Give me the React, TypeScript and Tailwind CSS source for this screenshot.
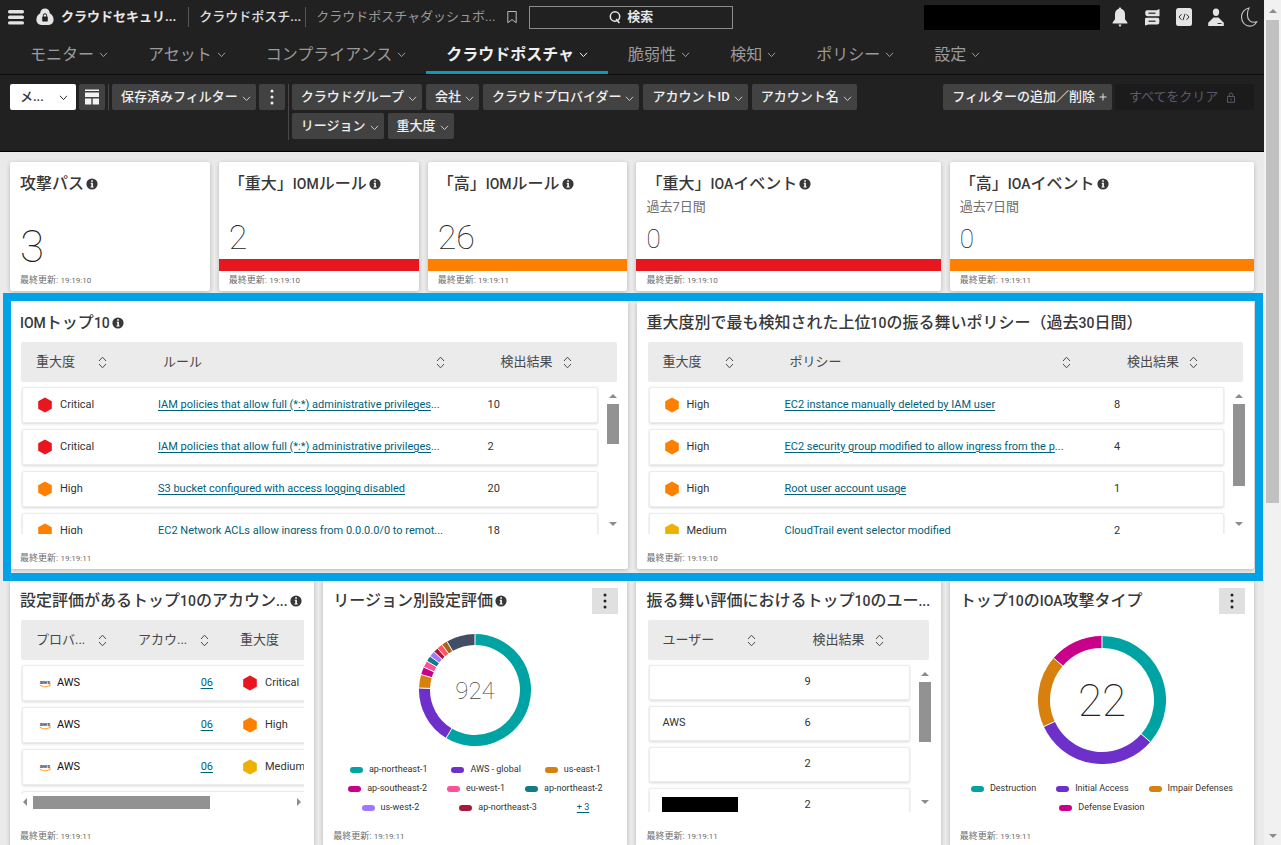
import React from 'react';
import { clsx } from 'clsx';

type Severity = 'Critical' | 'High' | 'Medium';

const severityColors: Record<Severity, string> = {
  Critical: 'fill-[#e8171f]',
  High: 'fill-[#ff8000]',
  Medium: 'fill-[#edb100]',
};

const navTabs = [
  { label: 'モニター' },
  { label: 'アセット' },
  { label: 'コンプライアンス' },
  { label: 'クラウドポスチャ', active: true },
  { label: '脆弱性' },
  { label: '検知' },
  { label: 'ポリシー' },
  { label: '設定' },
];

const filters = [
  'クラウドグループ',
  '会社',
  'クラウドプロバイダー',
  'アカウントID',
  'アカウント名',
  'リージョン',
  '重大度',
];

const iomRows: FindingRow[] = [
  { severity: 'Critical', name: 'IAM policies that allow full (*:*) administrative privileges', cut: true, count: 10 },
  { severity: 'Critical', name: 'IAM policies that allow full (*:*) administrative privileges', cut: true, count: 2 },
  { severity: 'High', name: 'S3 bucket configured with access logging disabled', count: 20 },
  { severity: 'High', name: 'EC2 Network ACLs allow ingress from 0.0.0.0/0 to remot', cut: true, count: 18 },
];

const policyRows: FindingRow[] = [
  { severity: 'High', name: 'EC2 instance manually deleted by IAM user', count: 8 },
  { severity: 'High', name: 'EC2 security group modified to allow ingress from the p', cut: true, count: 4 },
  { severity: 'High', name: 'Root user account usage', count: 1 },
  { severity: 'Medium', name: 'CloudTrail event selector modified', count: 2 },
];

const accountRows: Severity[] = ['Critical', 'High', 'Medium'];

const regionSlices: Slice[] = [
  { value: 211, color: '#00a3a3' },
  { value: 61, color: '#6e30ca' },
  { value: 14, color: '#d7800d' },
  { value: 8, color: '#c8008a' },
  { value: 7, color: '#ff5098' },
  { value: 6, color: '#127a88' },
  { value: 6, color: '#a078ff' },
  { value: 5, color: '#a8183a' },
  { value: 6, color: '#ff5560' },
  { value: 6, color: '#a8641c' },
  { value: 30, color: '#424e66' },
];

const attackSlices: Slice[] = [
  { value: 8, color: '#00a3a3' },
  { value: 7, color: '#6e30ca' },
  { value: 4, color: '#d7800d' },
  { value: 3, color: '#c8008a' },
];

/* ---------- icons ---------- */

function Chevron({ className }: { className?: string }) {
  return (
    <svg viewBox="0 0 9 9" className={clsx('h-[9px] w-[9px] shrink-0', className)} fill="none" stroke="currentColor">
      <path d="M1 2.8 4.5 6.6 8 2.8" />
    </svg>
  );
}

function Sorter() {
  return (
    <svg viewBox="0 0 9 13" className="h-[13px] w-[9px] shrink-0" fill="none" stroke="#4a4a4a">
      <path d="M1 5 4.5 1.2 8 5M1 8 4.5 11.8 8 8" />
    </svg>
  );
}

function InfoIcon() {
  return (
    <svg viewBox="0 0 12 12" className="h-3 w-3 shrink-0">
      <circle cx="6" cy="6" r="5.6" fill="#383838" />
      <path d="M5.2 2.3h1.7v1.5H5.2zM4.7 4.8h2.2v3.6h.7v1H4.5v-1h.8V5.8h-.6z" fill="#fff" />
    </svg>
  );
}

function Hexagon({ severity }: { severity: Severity }) {
  return (
    <svg viewBox="0 0 14 16" className={clsx('h-4 w-[14px] shrink-0', severityColors[severity])}>
      <path d="M7 .4 13.8 4.2v7.6L7 15.6.2 11.8V4.2z" />
    </svg>
  );
}

function Kebab({ className }: { className?: string }) {
  return (
    <svg viewBox="0 0 4 16" className={clsx('h-4 w-1', className)} fill="currentColor">
      <circle cx="2" cy="2" r="1.5" />
      <circle cx="2" cy="8" r="1.5" />
      <circle cx="2" cy="14" r="1.5" />
    </svg>
  );
}

function AwsLogo() {
  return (
    <svg viewBox="0 0 12 9" className="h-[9px] w-3 shrink-0">
      <text x="6" y="4.5" textAnchor="middle" fontSize="6" fontWeight="700" fill="#3b3f47">
        aws
      </text>
      <path d="M.8 6.1c3 2.2 7 2.2 10 .3" fill="none" stroke="#ff9a1a" strokeWidth="1" />
      <path d="M9.6 5.8l1.8-.1-.5 1.6" fill="none" stroke="#ff9a1a" strokeWidth=".7" />
    </svg>
  );
}

function MenuIcon() {
  return (
    <svg viewBox="0 0 16 16" className="h-4 w-4" fill="#e4e4e4">
      <rect x="0" y="1" width="16" height="3.4" rx="1.6" />
      <rect x="0" y="6.6" width="16" height="3.4" rx="1.6" />
      <rect x="0" y="12.2" width="16" height="3.4" rx="1.6" />
    </svg>
  );
}

function CloudLockIcon() {
  return (
    <svg viewBox="0 0 18 18" className="h-[18px] w-[18px]">
      <path
        d="M9 .5c2.7 0 4.6 2 4.8 4.7C16.4 6.7 17.6 9 17.6 11.6c0 3.2-2 5.4-5 5.4H5.4c-3 0-5-2.2-5-5.4C.4 9 1.6 6.7 4.2 5.2 4.4 2.5 6.3.5 9 .5z"
        fill="#e4e4e4"
      />
      <rect x="6.2" y="8.6" width="5.6" height="4.8" rx=".6" fill="#212121" />
      <path d="M7.4 8.8V7.3a1.6 1.6 0 0 1 3.2 0v1.5" fill="none" stroke="#212121" strokeWidth="1" />
    </svg>
  );
}

function BellIcon() {
  return (
    <svg viewBox="0 0 16 22" className="h-[22px] w-4" fill="#e4e4e4">
      <path d="M8 1.5c.7 0 1.1.5 1.100 1.200C11.600 3.400 13 5.400 13 8.200v5l2.400 3.300v1H.6v-1L3 13.200v-5c0-2.800 1.400-4.800 3.900-5.500C6.900 2 7.300 1.500 8 1.500zM6.400 18.500h3.200L8 21.200z" />
    </svg>
  );
}

function StackIcon() {
  return (
    <svg viewBox="0 0 16 20" className="h-5 w-4">
      <path d="M3 3.200h9.500L15.500 2v7.200H4C2 9.200 1.200 8.200 1.200 6.200s.5-3 1.800-3z" fill="#e4e4e4" />
      <path d="M2.500 10.800h11c1.300 0 1.800.7 1.800 2v2.700c0 1.300-.7 2-2 2H4.500L1 18.500v-6c0-1.100.5-1.700 1.500-1.700z" fill="#e4e4e4" />
      <path d="M5 6.200h6M5 14.200h6" stroke="#4a4a4a" strokeWidth="1.500" strokeLinecap="round" />
    </svg>
  );
}

function CodeIcon() {
  return (
    <svg viewBox="0 0 16 20" className="h-5 w-4">
      <rect width="16" height="18" y="1" rx="2.5" fill="#e4e4e4" />
      <path d="M5.500 7.200 3 10l2.500 2.800M10.500 7.200 13 10l-2.500 2.800M9 6.800l-2 6.400" fill="none" stroke="#333" />
    </svg>
  );
}

function UserIcon() {
  return (
    <svg viewBox="0 0 16 20" className="h-5 w-4" fill="#e4e4e4">
      <path d="M8 1.500c2.100 0 3.200 1.400 3.200 3.400C11.200 7.200 10 9 8 9S4.800 7.200 4.800 4.900C4.800 2.900 5.900 1.500 8 1.500z" />
      <path d="M5.500 10.400h5l5.300 5.400V19H.2v-3.200z" />
      <path d="M9.500 16.500h4" stroke="#333" />
    </svg>
  );
}

function MoonIcon() {
  return (
    <svg viewBox="0 0 18 22" className="h-[22px] w-[18px]" fill="none" stroke="#c4c4c4" strokeWidth="1.1">
      <path d="M9 2C4.500 2.800 1.500 6.600 1.500 11c0 5.200 3.700 9.100 8.200 9.100 3 0 5.300-1.400 6.900-4.200-5.800 1.400-9.200-2-9.200-7C7.400 5.800 7.900 3.700 9 2z" />
    </svg>
  );
}

function LayoutIcon() {
  return (
    <svg viewBox="0 0 14 16" className="h-4 w-[14px]" fill="#f4f4f4">
      <path d="M0 .5h14V2H0zM0 3.500h14V8H0zM0 9.500h6.300v6H0zM7.700 9.500H14v6H7.700z" />
    </svg>
  );
}

/* ---------- header ---------- */

function TopBar() {
  return (
    <div className="flex h-[34px] items-center pl-2 pr-1.5 text-[13px] leading-5">
      <button type="button" aria-label="メニュー">
        <MenuIcon />
      </button>
      <div className="ml-3 flex items-center gap-[7px] font-bold text-[#e8e8e8]">
        <CloudLockIcon />
        クラウドセキュリ...
      </div>
      <div className="ml-3 mr-2.5 h-5 w-px bg-[#555]" />
      <span className="font-medium text-[#e0e0e0]">クラウドポスチ...</span>
      <div className="ml-1 mr-2.5 h-5 w-px bg-[#555]" />
      <span className="text-[#9b9b9b]">クラウドポスチャダッシュボ...</span>
      <button type="button" aria-label="ブックマーク" className="ml-3">
        <svg viewBox="0 0 10 14" className="h-[14px] w-2.5" fill="none" stroke="#bdbdbd">
          <path d="M.8 1.500h8.400v11.200L5 9.600.8 12.700z" />
        </svg>
      </button>
      <button
        type="button"
        className="ml-3 flex h-[23px] w-[204px] items-center justify-center gap-1.5 border border-[#8c8c8c] font-bold text-[#e8e8e8]"
      >
        <svg viewBox="0 0 12 14" className="h-[14px] w-3" fill="none" stroke="#e8e8e8" strokeWidth="1.5">
          <circle cx="6" cy="6.500" r="4.700" />
          <path d="M7.200 9l3.200 4" />
        </svg>
        検索
      </button>
      <div className="ml-auto h-[25px] w-[176px] bg-black" />
      <div className="ml-3 flex items-center gap-4">
        <BellIcon />
        <StackIcon />
        <CodeIcon />
        <UserIcon />
        <MoonIcon />
      </div>
    </div>
  );
}

function NavTabs() {
  return (
    <nav className="flex h-10 items-stretch pl-2.5 text-base">
      {navTabs.map((tab) => (
        <a
          key={tab.label}
          href="#"
          className={clsx(
            'flex items-center gap-[5px] border-b-3 px-5 pt-1',
            tab.active ? 'border-[#079cbb] font-bold text-[#efefef]' : 'border-transparent text-[#9b9b9b]'
          )}
        >
          {tab.label}
          <Chevron />
        </a>
      ))}
    </nav>
  );
}

function FilterButton({ label }: { label: string }) {
  return (
    <button
      type="button"
      className="flex h-[26px] items-center gap-1 rounded-xs bg-[#424242] pl-[9px] pr-[5px] text-[#f0f0f0]"
    >
      {label}
      <Chevron className="mt-[3px] text-[#c8c8c8]" />
    </button>
  );
}

function FilterBar() {
  return (
    <div className="flex min-h-[78px] items-start border-b border-t border-b-black border-t-[#0c0c0c] px-2.5 pt-[9px] text-[13px] font-medium leading-5">
      <button
        type="button"
        className="flex h-[26px] w-[66px] items-center justify-between rounded-xs bg-white pl-2.5 pr-2 text-[#333]"
      >
        メ...
        <Chevron />
      </button>
      <button
        type="button"
        aria-label="レイアウト"
        className="ml-[3px] flex h-[26px] w-[26px] items-center justify-center rounded-xs bg-[#424242]"
      >
        <LayoutIcon />
      </button>
      <div className="mx-[3px] h-[26px] w-px bg-[#484848]" />
      <FilterButton label="保存済みフィルター" />
      <button
        type="button"
        aria-label="その他"
        className="ml-[3px] flex h-[26px] w-[26px] items-center justify-center rounded-xs bg-[#424242]"
      >
        <Kebab className="text-[#f0f0f0]" />
      </button>
      <div className="mx-[3px] h-14 w-px bg-[#484848]" />
      <div className="flex max-w-[600px] flex-1 flex-wrap gap-x-1 gap-y-[3px]">
        {filters.map((label) => (
          <FilterButton key={label} label={label} />
        ))}
      </div>
      <div className="ml-auto flex gap-[3px]">
        <button
          type="button"
          className="flex h-[26px] items-center gap-1 rounded-xs bg-[#424242] pl-[9px] pr-[5px] text-[#f0f0f0]"
        >
          フィルターの追加／削除
          <svg viewBox="0 0 8 8" className="h-2 w-2" stroke="#e0e0e0">
            <path d="M4 .5v7M.5 4h7" />
          </svg>
        </button>
        <button
          type="button"
          disabled
          className="flex h-[26px] w-[139px] items-center gap-2 rounded-xs bg-[#1b1b1b] pl-3.5 font-normal text-[#5b5b68]"
        >
          すべてをクリア
          <svg viewBox="0 0 10 11" className="h-[11px] w-2.5" fill="none" stroke="#5b5b68">
            <path d="M1.500 4.500h7v5.800h-7zM3.200 4.500V2.800a1.800 1.800 0 0 1 3.600 0v1.700M5 6.500v2" />
          </svg>
        </button>
      </div>
    </div>
  );
}

/* ---------- cards ---------- */

// Latin letters and digits are set a step smaller than the kana around them
function MixedText({ text }: { text: string }) {
  return (
    <span>
      {text.split(/([A-Za-z0-9.]+)/).map((part, i) =>
        i % 2 ? (
          <span key={i} className="text-sm leading-6">
            {part}
          </span>
        ) : (
          part
        )
      )}
    </span>
  );
}

interface CardProps {
  title: string;
  info?: boolean;
  updated: string;
  className?: string;
  menu?: boolean;
  children?: React.ReactNode;
}

function Card({ title, info, updated, className, menu, children }: CardProps) {
  return (
    <section className={clsx('flex flex-col rounded-xs bg-white shadow-[0_1px_4px_rgba(0,0,0,0.22)]', className)}>
      <div className="flex h-[41px] shrink-0 items-center justify-between pl-2.5 pr-[9px] pt-0.5">
        <h2 className="flex items-center gap-0.5 whitespace-nowrap text-base font-medium leading-6 text-[#383838]">
          <MixedText text={title} />
          {info && <InfoIcon />}
        </h2>
        {menu && (
          <button
            type="button"
            aria-label="メニュー"
            className="flex h-[26px] w-[26px] items-center justify-center bg-[#e0e0e0]"
          >
            <Kebab className="text-[#222]" />
          </button>
        )}
      </div>
      <div className="min-h-0 flex-1">{children}</div>
      <p className="px-2.5 pb-0.5 pt-px text-[9px] leading-4 text-[#6c6c6c]">
        最終更新: <time className="text-[8px]">{updated}</time>
      </p>
    </section>
  );
}

interface StatCardProps extends CardProps {
  value: number;
  subtitle?: string;
  bar?: 'critical' | 'high';
}

function StatCard({ value, subtitle, bar, ...card }: StatCardProps) {
  return (
    <Card info {...card}>
      <div className="flex h-full flex-col">
        {subtitle && <p className="px-2.5 text-[13px] leading-[8px] text-[#707070]">{subtitle}</p>}
        <p
          className={clsx(
            'mt-auto px-2.5 font-thin text-[#222]',
            !bar && 'text-[44px] leading-[48px]',
            bar && !subtitle && 'text-[34px] leading-[44px]',
            bar && subtitle && 'text-[26px] leading-10'
          )}
        >
          {value}
        </p>
        {bar && <div className={clsx('h-3', bar === 'critical' ? 'bg-[#e8171f]' : 'bg-[#ff8000]')} />}
      </div>
    </Card>
  );
}

function Arrow({ dir }: { dir: 'up' | 'down' | 'left' | 'right' }) {
  const paths = {
    up: 'M0 6 4 2l4 4z',
    down: 'M0 2h8L4 6z',
    left: 'M6 0v8L2 4z',
    right: 'M2 0v8l4-4z',
  };
  return (
    <svg viewBox="0 0 8 8" className="h-2 w-2 shrink-0" fill="#8c8c8c">
      <path d={paths[dir]} />
    </svg>
  );
}

function ListScrollbar({ thumb }: { thumb: string }) {
  return (
    <div className="flex w-3 flex-col items-center pb-1.5 pt-2.5">
      <Arrow dir="up" />
      <div className={clsx('mt-1 w-3 bg-[#929292]', thumb)} />
      <div className="mt-auto">
        <Arrow dir="down" />
      </div>
    </div>
  );
}

function HeadCell({ label, className, sortable = true }: { label: string; className: string; sortable?: boolean }) {
  return (
    <th scope="col" className={clsx('flex items-center font-normal', className)}>
      {label}
      {sortable && <Sorter />}
    </th>
  );
}

const headRow = 'h-10 rounded-xs bg-[#ebebeb] text-[13px] text-[#484848]';
const bodyRow = 'items-center rounded-xs border border-[#ececec] bg-white shadow-[0_1px_3px_rgba(0,0,0,0.16)]';

interface FindingRow {
  severity: Severity;
  name: string;
  cut?: boolean;
  count: number;
}

function FindingsTable({ nameLabel, rows, thumb }: { nameLabel: string; rows: FindingRow[]; thumb: string }) {
  return (
    <div className="flex pl-[11px] pr-[9px]">
      <table className="block min-w-0 flex-1 text-left text-[11px] text-[#333]">
        <thead className="block">
          <tr className={clsx('-mr-[18px] grid grid-cols-[86px_minmax(0,1fr)_172px]', headRow)}>
            <HeadCell label="重大度" className="justify-between pl-[15px]" />
            <HeadCell label={nameLabel} className="justify-between pl-14" />
            <HeadCell label="検出結果" className="gap-2.5 pl-14" />
          </tr>
        </thead>
        <tbody className="block h-[152px] overflow-hidden px-px pt-[5px]">
          {rows.map((row, i) => (
            <tr key={i} className={clsx('mb-1.5 grid h-9 grid-cols-[135px_minmax(0,1fr)_156px]', bodyRow)}>
              <td className="flex items-center gap-2 pl-[15px]">
                <Hexagon severity={row.severity} />
                {row.severity}
              </td>
              <td className="whitespace-nowrap text-[#00617a]">
                <a href="#" className="underline underline-offset-2">
                  {row.name}
                </a>
                {row.cut && '...'}
              </td>
              <td className="pl-[47px]">{row.count}</td>
            </tr>
          ))}
        </tbody>
      </table>
      <div className="ml-2 flex pt-10">
        <ListScrollbar thumb={thumb} />
      </div>
    </div>
  );
}

function AccountsTable() {
  return (
    <div className="pl-[11px] pr-2.5">
      <div className="overflow-hidden">
        <table className="block w-[400px] text-left text-[11px] text-[#333]">
          <thead className="block">
            <tr className={clsx('grid grid-cols-[86px_102px_1fr]', headRow)}>
              <HeadCell label="プロバ..." className="justify-between pl-[15px]" />
              <HeadCell label="アカウ..." className="justify-between pl-[31px]" />
              <HeadCell label="重大度" className="pl-[31px]" sortable={false} />
            </tr>
          </thead>
          <tbody className="block h-[134px] overflow-hidden px-px pt-[5px]">
            {accountRows.map((severity) => (
              <tr key={severity} className={clsx('mb-1.5 grid h-9 grid-cols-[90px_100px_1fr]', bodyRow)}>
                <td className="flex items-center gap-1.5 pl-4 text-[#111]">
                  <AwsLogo />
                  AWS
                </td>
                <td className="text-right">
                  <a href="#" className="text-[#00617a] underline underline-offset-2">
                    06
                  </a>
                </td>
                <td className="flex items-center gap-2 pl-[30px]">
                  <Hexagon severity={severity} />
                  {severity}
                </td>
              </tr>
            ))}
            <tr className={clsx('grid h-9', bodyRow)} />
          </tbody>
        </table>
      </div>
      <div className="flex h-4 items-center">
        <Arrow dir="left" />
        <div className="ml-1 h-[13px] w-[177px] bg-[#929292]" />
        <div className="ml-auto pr-px">
          <Arrow dir="right" />
        </div>
      </div>
    </div>
  );
}

function UsersTable() {
  const rows = [
    { user: '', count: 9 },
    { user: 'AWS', count: 6 },
    { user: '', count: 2 },
    { user: null, count: 2 },
  ];
  return (
    <div className="flex pl-3 pr-2.5">
      <table className="block min-w-0 flex-1 text-left text-[11px] text-[#333]">
        <thead className="block">
          <tr className={clsx('-mr-[18px] grid grid-cols-[108px_1fr]', headRow)}>
            <HeadCell label="ユーザー" className="justify-between pl-3.5" />
            <HeadCell label="検出結果" className="gap-2.5 pl-14" />
          </tr>
        </thead>
        <tbody className="block h-[152px] overflow-hidden px-px pt-[5px]">
          {rows.map((row, i) => (
            <tr key={i} className={clsx('mb-1.5 grid h-[35px] grid-cols-[154px_1fr]', bodyRow)}>
              <td className="pl-3">
                {row.user === null ? <div className="h-[17px] w-[76px] bg-black" /> : row.user}
              </td>
              <td>{row.count}</td>
            </tr>
          ))}
        </tbody>
      </table>
      <div className="ml-2 flex pt-10">
        <ListScrollbar thumb="h-[60px]" />
      </div>
    </div>
  );
}

interface Slice {
  value: number;
  color: string;
}

interface DonutProps {
  slices: Slice[];
  radius: number;
  width: number;
  children: React.ReactNode;
}

function Donut({ slices, radius, width, children }: DonutProps) {
  const total = slices.reduce((sum, s) => sum + s.value, 0);
  const r = radius - width / 2;
  const size = radius * 2;
  let start = 0;

  const point = (turn: number, dist: number) => {
    const a = turn * Math.PI * 2 - Math.PI / 2;
    return `${radius + dist * Math.cos(a)} ${radius + dist * Math.sin(a)}`;
  };

  return (
    <svg viewBox={`0 0 ${size} ${size}`} width={size} height={size} className="mx-auto block">
      {slices.map((slice) => {
        const end = start + slice.value / total;
        const large = end - start > 0.5 ? 1 : 0;
        const d = `M${point(start, r)}A${r} ${r} 0 ${large} 1 ${point(end, r)}`;
        start = end;
        return <path key={slice.color} d={d} fill="none" stroke={slice.color} strokeWidth={width} />;
      })}
      {slices.map((slice) => {
        start += slice.value / total;
        const edge = `M${point(start, r - width)}L${point(start, radius)}`;
        return <path key={slice.color} d={edge} stroke="#fff" strokeWidth="1" />;
      })}
      {children}
    </svg>
  );
}

function LegendItem({ label, color }: { label: string; color: string }) {
  return (
    <li className="flex items-center gap-1.5">
      <span className={clsx('mt-0.5 h-1.5 w-[13px] rounded-full', color)} />
      {label}
    </li>
  );
}

const legendRow = 'flex h-[19px] items-center justify-center whitespace-nowrap text-[9px] leading-4 text-[#333]';

function RegionChart() {
  return (
    <div className="pt-3.5">
      <Donut slices={regionSlices} radius={56} width={11}>
        <text x="56" y="65" textAnchor="middle" className="fill-[#444] text-[24px] font-thin">
          924
        </text>
      </Donut>
      <div className="pt-[13px]">
        <ul className={clsx(legendRow, 'gap-6')}>
          <LegendItem label="ap-northeast-1" color="bg-[#00a3a3]" />
          <LegendItem label="AWS - global" color="bg-[#6e30ca]" />
          <LegendItem label="us-east-1" color="bg-[#d7800d]" />
        </ul>
        <ul className={clsx(legendRow, 'gap-5')}>
          <LegendItem label="ap-southeast-2" color="bg-[#c8008a]" />
          <LegendItem label="eu-west-1" color="bg-[#ff5098]" />
          <LegendItem label="ap-northeast-2" color="bg-[#127a88]" />
        </ul>
        <ul className={clsx(legendRow, 'gap-10')}>
          <LegendItem label="us-west-2" color="bg-[#a078ff]" />
          <LegendItem label="ap-northeast-3" color="bg-[#a8183a]" />
          <li>
            <a href="#" className="text-[#00617a] underline underline-offset-2">
              + 3
            </a>
          </li>
        </ul>
      </div>
    </div>
  );
}

function AttackChart() {
  return (
    <div className="pt-4">
      <Donut slices={attackSlices} radius={64} width={12}>
        <text x="64" y="80" textAnchor="middle" className="fill-[#222] text-[44px] font-thin">
          22
        </text>
      </Donut>
      <div className="pt-[14px]">
        <ul className={clsx(legendRow, 'gap-5')}>
          <LegendItem label="Destruction" color="bg-[#00a3a3]" />
          <LegendItem label="Initial Access" color="bg-[#6e30ca]" />
          <LegendItem label="Impair Defenses" color="bg-[#d7800d]" />
        </ul>
        <ul className={legendRow}>
          <LegendItem label="Defense Evasion" color="bg-[#c8008a]" />
        </ul>
      </div>
    </div>
  );
}

function PageScrollbar() {
  return (
    <div className="flex w-[17px] shrink-0 flex-col items-center bg-[#f1f1f1] pb-[5px] pt-[7px]">
      <Arrow dir="up" />
      <div className="mt-[5px] h-[58%] w-[13px] bg-[#c1c1c1]" />
      <div className="mt-auto">
        <Arrow dir="down" />
      </div>
    </div>
  );
}

export default function App() {
  return (
    <div className="flex h-screen overflow-hidden bg-[#eaeaea] font-[Roboto,'Noto_Sans_CJK_JP',sans-serif]">
      <div className="min-w-0 flex-1">
        <header className="bg-[#212121]">
          <TopBar />
          <NavTabs />
          <FilterBar />
        </header>

        <main className="grid grid-cols-12 gap-x-[9px] gap-y-2.5 px-2.5 pt-2.5">
          <StatCard className="col-span-2 h-[129px]" title="攻撃パス" value={3} updated="19:19:10" />
          <StatCard className="col-span-2" title="「重大」IOMルール" value={2} bar="critical" updated="19:19:10" />
          <StatCard className="col-span-2" title="「高」IOMルール" value={26} bar="high" updated="19:19:11" />
          <StatCard
            className="col-span-3"
            title="「重大」IOAイベント"
            subtitle="過去7日間"
            value={0}
            bar="critical"
            updated="19:19:10"
          />
          <StatCard
            className="col-span-3"
            title="「高」IOAイベント"
            subtitle="過去7日間"
            value={0}
            bar="high"
            updated="19:19:11"
          />

          <div className="relative col-span-12 grid grid-cols-2 gap-x-[9px]">
            <Card className="h-[268px]" title="IOMトップ10" info updated="19:19:11">
              <FindingsTable nameLabel="ルール" rows={iomRows} thumb="h-10" />
            </Card>
            <Card title="重大度別で最も検知された上位10の振る舞いポリシー（過去30日間）" updated="19:19:10">
              <FindingsTable nameLabel="ポリシー" rows={policyRows} thumb="h-[82px]" />
            </Card>
            {/* highlight frame around the two findings lists */}
            <div className="pointer-events-none absolute -bottom-3 -left-[7px] -right-[9px] -top-2 border-8 border-[#00a2e8]" />
          </div>

          <Card className="col-span-3 h-[268px]" title="設定評価があるトップ10のアカウン..." info updated="19:19:11">
            <AccountsTable />
          </Card>
          <Card className="col-span-3" title="リージョン別設定評価" info menu updated="19:19:11">
            <RegionChart />
          </Card>
          <Card className="col-span-3" title="振る舞い評価におけるトップ10のユー..." updated="19:19:11">
            <UsersTable />
          </Card>
          <Card className="col-span-3" title="トップ10のIOA攻撃タイプ" menu updated="19:19:11">
            <AttackChart />
          </Card>
        </main>
      </div>
      <PageScrollbar />
    </div>
  );
}
